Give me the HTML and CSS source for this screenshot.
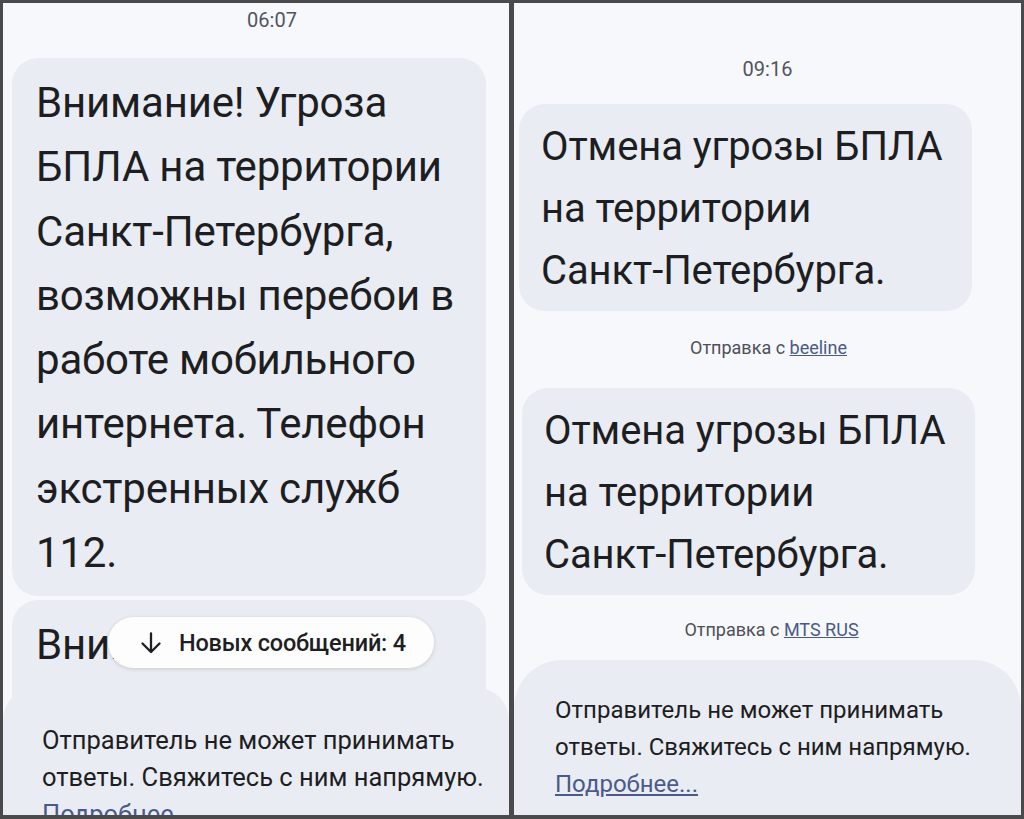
FILE: index.html
```html
<!DOCTYPE html>
<html lang="ru">
<head>
    <meta charset="UTF-8">
    <meta name="viewport" content="width=device-width, initial-scale=1.0">
    <title>Сообщения</title>
    <link rel="stylesheet" href="styles.css">
</head>
<body>
    <div class="frame">
        <!-- левый экран: первое сообщение -->
        <section class="panel">
            <div class="thread thread-left">
                <div class="time">06:07</div>
                <div class="bubble bubble-big">Внимание! Угроза БПЛА на территории <span class="nw">Санкт-Петербурга,</span> возможны перебои в работе мобильного интернета. Телефон экстренных служб 112.</div>
                <div class="bubble bubble-big bubble-next">Внимание!</div>
            </div>

            <button class="new-pill">
                <svg class="arrow" viewBox="0 0 22 22" width="22" height="22">
                    <path d="M11 1.5v18M2.5 11.5l8.5 8.5 8.5-8.5" fill="none" stroke="#1f1f23" stroke-width="2.3" stroke-linecap="round" stroke-linejoin="round"/>
                </svg>
                <span>Новых сообщений: 4</span>
            </button>

            <div class="sheet sheet-left">
                <p>Отправитель не может принимать ответы. Свяжитесь с ним напрямую. <a href="#">Подробнее...</a></p>
            </div>
        </section>

        <!-- правый экран: отмена угрозы -->
        <section class="panel">
            <div class="thread thread-right">
                <div class="time">09:16</div>
                <div class="bubble bubble-mid">Отмена угрозы БПЛА на территории <span class="nw">Санкт-Петербурга.</span></div>
                <div class="via">Отправка с <a href="#">beeline</a></div>
                <div class="bubble bubble-mid bubble-shift">Отмена угрозы БПЛА на территории <span class="nw">Санкт-Петербурга.</span></div>
                <div class="via">Отправка с <a href="#">MTS RUS</a></div>
            </div>

            <div class="sheet sheet-right">
                <p>Отправитель не может принимать ответы. Свяжитесь с ним напрямую.<br><a href="#">Подробнее...</a></p>
            </div>
        </section>
    </div>
</body>
</html>
```

FILE: styles.css
```css
html, body {
    margin: 0;
    height: 100%;
}
body {
    font-family: 'Roboto', 'Noto Sans', sans-serif;
    background: #4a4a4c;
    color: #1d1e22;
}
.frame {
    display: flex;
    gap: 5px;
    height: 819px;
    padding: 3px 3px 4px 3px;
    box-sizing: border-box;
    background: #4a4a4c;
}
.panel {
    position: relative;
    flex: 0 0 506px;
    overflow: hidden;
    background: #f7f8fc;
}
.panel:last-child {
    flex-basis: 507px;
}
.thread {
    display: flex;
    flex-direction: column;
}
.nw {
    white-space: nowrap;
}
.time {
    text-align: center;
    font-size: 20px;
    line-height: 22px;
    color: #52545c;
}
.thread-left .time {
    margin: 6px 0 27px;
    padding-left: 32px;
}
.thread-right .time {
    margin: 55px 0 24px;
    padding-left: 0;
}
.bubble {
    background: #eaecf3;
    border-radius: 26px;
}
.bubble-big {
    width: 474px;
    margin-left: 9px;
    padding: 13px 14px 11px 24px;
    box-sizing: border-box;
    font-size: 42px;
    line-height: 64.3px;
    letter-spacing: -0.2px;
}
.bubble-next {
    margin-top: 4px;
    height: 300px;
}
.bubble-mid {
    width: 453px;
    margin-left: 5px;
    padding: 12px 10px 9px 22px;
    box-sizing: border-box;
    font-size: 40px;
    line-height: 62px;
    letter-spacing: -0.1px;
}
.bubble-shift {
    margin-left: 8px;
}
.via {
    text-align: center;
    font-size: 18px;
    line-height: 22px;
    color: #4e5058;
    margin: 26px 0 29px;
    padding-left: 2px;
}
.bubble-shift + .via {
    margin: 24px 0 0;
    padding-left: 8px;
}
.via a {
    color: #4a5a86;
}
.new-pill {
    position: absolute;
    left: 105px;
    top: 614px;
    width: 326px;
    height: 51px;
    display: flex;
    align-items: center;
    gap: 17px;
    padding: 0 0 0 32px;
    border: none;
    border-radius: 26px;
    background: #fdfdfe;
    box-shadow: 0 1px 4px rgba(0, 0, 0, 0.14);
    font-family: inherit;
    font-size: 23.5px;
    font-weight: 500;
    letter-spacing: -0.2px;
    color: #1f1f23;
}
.sheet {
    position: absolute;
    left: 0;
    right: 0;
    bottom: 0;
    background: #eaecf3;
}
.sheet p {
    margin: 0;
}
.sheet a {
    color: #4a5a8a;
}
.sheet-left {
    height: 127px;
    padding: 34px 10px 0 39px;
    box-sizing: border-box;
    font-size: 25.5px;
    line-height: 37px;
    border-radius: 32px 32px 0 0;
}
.sheet-left p {
    width: 455px;
}
.sheet-right {
    height: 155px;
    padding: 32px 10px 0 41px;
    box-sizing: border-box;
    font-size: 24px;
    line-height: 37px;
    border-radius: 48px 48px 0 0;
}
.sheet-right p {
    width: 440px;
}
```
